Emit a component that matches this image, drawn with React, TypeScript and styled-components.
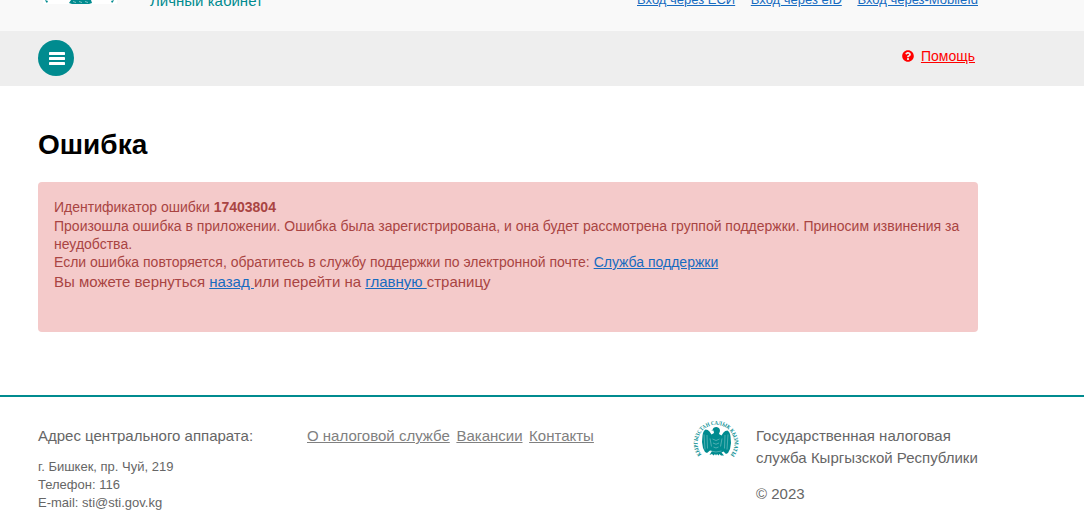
import React from "react";
import styled, { createGlobalStyle } from "styled-components";
import { FaQuestionCircle } from "react-icons/fa";

const TEAL = "#008b8f";

const GlobalStyle = createGlobalStyle`
  * { box-sizing: border-box; }
  html, body { margin: 0; background: #fff; overflow: hidden; }
  body { font-family: "Liberation Sans", Arial, sans-serif; color: #666; }
  p, h1 { margin: 0; }
`;

const Page = styled.div`
  height: 525px;
  overflow: hidden;
  display: flex;
  flex-direction: column;
`;

const Container = styled.div`
  width: 940px;
  margin-left: 38px;
`;

const Header = styled.header`
  height: 31px;
  flex: none;
  overflow: hidden;
  display: flex;
  align-items: flex-end;
  background: #f9f9f9;
`;

const HeaderRow = styled(Container)`
  display: flex;
  align-items: flex-end;
  height: 100px;
  flex: none;
`;

const HeaderLogo = styled.div`
  width: 74px;
  height: 73px;
  margin: 0 33px 27px 5px;
  background: #fff;
  svg { display: block; }
`;

const Cabinet = styled.p`
  font-size: 15px;
  line-height: 18px;
  color: ${TEAL};
  padding-bottom: 21px;
`;

const LoginLinks = styled.nav`
  display: flex;
  gap: 15.6px;
  margin-left: auto;
  padding-bottom: 23px;
`;

const Link = styled.a`
  color: #176bc0;
  text-decoration: underline;
`;

const LoginLink = styled(Link)`
  font-size: 13px;
  line-height: 16px;
  white-space: nowrap;
`;

const Toolbar = styled.div`
  flex: none;
  height: 55px;
  background: #eee;
`;

const ToolbarRow = styled(Container)`
  height: 54px;
  display: flex;
  align-items: center;
  justify-content: space-between;
`;

const MenuButton = styled.button`
  width: 36px;
  height: 36px;
  padding: 0;
  border: 0;
  border-radius: 50%;
  background: ${TEAL};
  display: flex;
  align-items: center;
  justify-content: center;
  svg { display: block; margin: 1px 0 0 1px; }
`;

const Help = styled.div`
  display: flex;
  align-items: center;
  gap: 7px;
  padding: 0 3px 4px 0;
  color: #f00;
  font-size: 14px;
  line-height: 18px;
  a { color: inherit; text-decoration: underline; }
`;

const Title = styled.h1`
  font-size: 28px;
  line-height: 32px;
  font-weight: bold;
  color: #000;
  margin: 43px 0 21px;
`;

const Alert = styled.section`
  height: 150px;
  padding: 16px;
  border-radius: 4px;
  background: #f4caca;
  color: #a94442;
`;

const AlertLine = styled.p<{ $size?: number; $after?: number }>`
  font-size: ${(p) => p.$size ?? 14}px;
  line-height: 18px;
  margin-bottom: ${(p) => p.$after ?? 0}px;
  white-space: nowrap;
`;

const Footer = styled.footer`
  margin-top: 63px;
  border-top: 2px solid ${TEAL};
`;

const FooterRow = styled(Container)`
  display: flex;
  font-size: 15px;
  line-height: 22px;
  padding-top: 28px;
  white-space: nowrap;
`;

const Address = styled.div`
  width: 269px;
`;

const AddressDetails = styled.div`
  margin-top: 11px;
  font-size: 13px;
  line-height: 18px;
`;

const FooterNav = styled.nav`
  display: flex;
  gap: 6.6px;
  width: 386px;
  a { color: #808080; }
`;

const FooterLogo = styled.div`
  width: 46px;
  height: 44px;
  margin: -8px 17px 0 0;
  svg { display: block; }
`;

const Copyright = styled.p`
  margin-top: 14px;
`;

const Emblem = () => (
  <svg width="46" height="44" viewBox="0 0 92 88">
    <path id="emblem-arc" d="M17 75.5A37 37 0 1 1 75 75.5" fill="none" />
    <text fill={TEAL} fontFamily="Liberation Serif, serif" fontWeight="bold" fontSize="11.5">
      <textPath href="#emblem-arc" textLength="166" lengthAdjust="spacingAndGlyphs">КЫРГЫЗСТАН САЛЫК КЫЗМАТЫ</textPath>
    </text>
    <path
      fill={TEAL}
      d="M39 26q1-6 8-6 7 1 7 8l-2 6 5 3 4-6q3-4 8-4 5 3 6 12l1 13-2 12-4 8-4 2-5-5-4 2 5 6-6 0-3-3-2 3-3-3-2 3-2-3-3 3-3-3-5 2 5-8-4-1-6 5-4-2-4-8-2-12 1-13q1-9 6-12 5 0 8 4l4 6 5-3-1-5-5 0z"
    />
    <g fill="none" stroke="#9fd3d4" strokeWidth="1">
      <path d="M22 35l2 30M28 36l1 27M70 35l-2 30M64 36l-1 27" />
      <path d="M34 43l3 16M58 43l-3 16" />
      <path d="M39 44q7 6 14 0M40 52q6 5 12 0M41 60q5 4 10 0M35 68q11 4 22 0" />
    </g>
  </svg>
);

const HeaderEmblem = () => (
  <svg width="74" height="73" viewBox="0 0 74 73">
    <g fill={TEAL}>
      <path d="M2 69l3 1-1 2-1-1zM71 69l-3 1 1 2 1-1zM28 69h20l1 3-3 1H29l-3-1z" />
      <path d="M10 20l12 10 10-8 5-8 5 8 10 8 12-10-4 31-13 9v9H27v-9l-13-9z" />
    </g>
    <path d="M30 70.5l3 1M36 70.5l3 1M42 70.5l3 1" stroke="#9fd3d4" strokeWidth="0.8" />
  </svg>
);

export default function App() {
  return (
    <Page>
      <GlobalStyle />
      <Header>
        <HeaderRow>
          <HeaderLogo><HeaderEmblem /></HeaderLogo>
          <Cabinet>Личный кабинет</Cabinet>
          <LoginLinks>
            <LoginLink>Вход через ЕСИ</LoginLink>
            <LoginLink>Вход через eID</LoginLink>
            <LoginLink>Вход через-MobileId</LoginLink>
          </LoginLinks>
        </HeaderRow>
      </Header>
      <Toolbar>
        <ToolbarRow>
          <MenuButton aria-label="Меню">
            <svg width="16" height="13" viewBox="0 0 16 13" fill="#fff">
              <rect width="16" height="3" rx="0.4" />
              <rect y="5" width="16" height="3" rx="0.4" />
              <rect y="10" width="16" height="3" rx="0.4" />
            </svg>
          </MenuButton>
          <Help>
            <FaQuestionCircle size={12} />
            <a>Помощь</a>
          </Help>
        </ToolbarRow>
      </Toolbar>
      <Container>
        <Title>Ошибка</Title>
        <Alert>
          <AlertLine $after={1}>Идентификатор ошибки <b>17403804</b></AlertLine>
          <AlertLine>Произошла ошибка в приложении. Ошибка была зарегистрирована, и она будет рассмотрена группой поддержки. Приносим извинения за</AlertLine>
          <AlertLine>неудобства.</AlertLine>
          <AlertLine $after={2}>Если ошибка повторяется, обратитесь в службу поддержки по электронной почте: <Link>Служба поддержки</Link></AlertLine>
          <AlertLine $size={15}>Вы можете вернуться <Link>назад </Link>или перейти на <Link>главную </Link>страницу</AlertLine>
        </Alert>
      </Container>
      <Footer>
        <FooterRow>
          <Address>
            <p>Адрес центрального аппарата:</p>
            <AddressDetails>
              <p>г. Бишкек, пр. Чуй, 219</p>
              <p>Телефон: 116</p>
              <p>E-mail: sti@sti.gov.kg</p>
            </AddressDetails>
          </Address>
          <FooterNav>
            <Link>О налоговой службе</Link>
            <Link>Вакансии</Link>
            <Link>Контакты</Link>
          </FooterNav>
          <FooterLogo><Emblem /></FooterLogo>
          <div>
            <p>Государственная налоговая</p>
            <p>служба Кыргызской Республики</p>
            <Copyright>© 2023</Copyright>
          </div>
        </FooterRow>
      </Footer>
    </Page>
  );
}
